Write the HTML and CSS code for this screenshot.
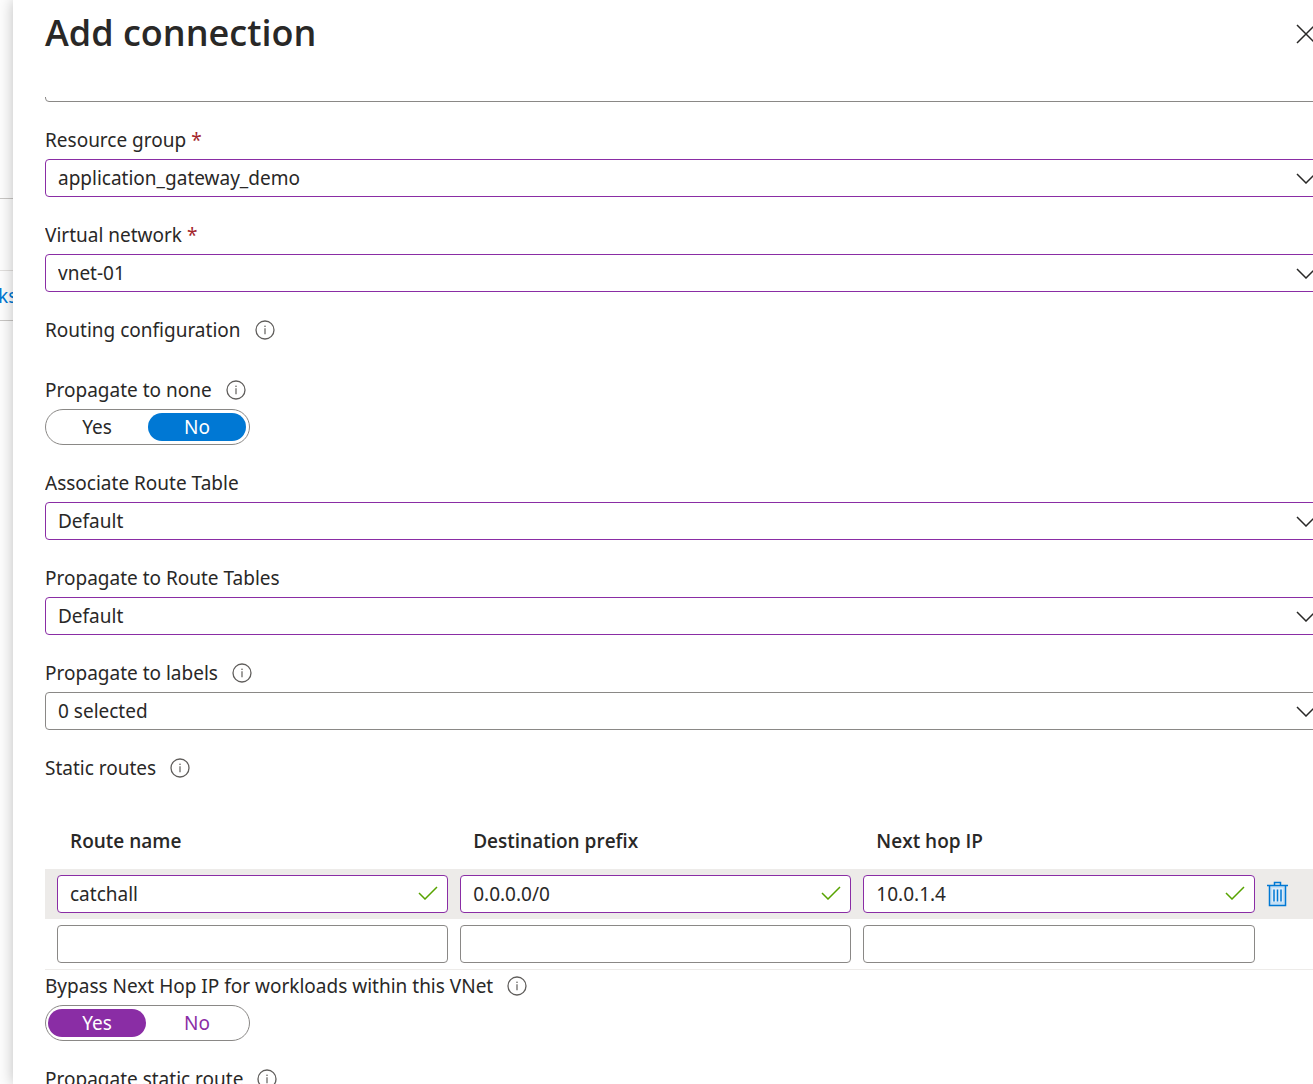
FILE: index.html
```html
<!DOCTYPE html>
<html lang="en">
<head>
<meta charset="utf-8">
<title>Add connection</title>
<link rel="stylesheet" href="styles.css">
</head>
<body>
<svg class="defs" aria-hidden="true">
  <symbol id="info" viewBox="0 0 20 20"><circle cx="10" cy="10" r="9" fill="none" stroke="currentColor" stroke-width="1.3"/><path d="M10 8.2v6" stroke="currentColor" stroke-width="1.2"/><circle cx="10" cy="6.2" r=".8" fill="currentColor"/></symbol>
  <symbol id="chevron" viewBox="0 0 20 11"><path d="M1 1l9 9 9-9" fill="none" stroke="currentColor" stroke-width="1.5"/></symbol>
  <symbol id="check" viewBox="0 0 20 14"><path d="M1 7l6 6L19 1" fill="none" stroke="currentColor" stroke-width="1.5"/></symbol>
</svg>
<div class="shell">
  <aside class="backdrop">
    <div class="backdrop-head"></div>
    <div class="backdrop-bar"></div>
    <div class="backdrop-row"><a href="#">ks</a></div>
  </aside>
  <main class="panel">
    <header class="panel-head">
      <h1>Add connection</h1>
      <button class="icon-button" type="button" aria-label="Close"><svg width="20" height="20" viewBox="0 0 20 20"><path d="M1 1l18 18M19 1L1 19" stroke="currentColor" stroke-width="1.5"/></svg></button>
    </header>
    <form class="panel-body">
      <div class="select select-cut"><select aria-label="Subscription"><option></option></select></div>
      <div class="field">
        <div class="label"><label for="group">Resource group <span class="required">*</span></label></div>
        <div class="select edited"><select id="group"><option>application_gateway_demo</option></select><svg class="chevron"><use href="#chevron"/></svg></div>
      </div>
      <div class="field">
        <div class="label"><label for="vnet">Virtual network <span class="required">*</span></label></div>
        <div class="select edited"><select id="vnet"><option>vnet-01</option></select><svg class="chevron"><use href="#chevron"/></svg></div>
      </div>
      <div class="field heading">
        <div class="label"><span>Routing configuration</span><button class="info" type="button" aria-label="Info"><svg><use href="#info"/></svg></button></div>
      </div>
      <div class="field">
        <div class="label"><span id="none-label">Propagate to none</span><button class="info" type="button" aria-label="Info"><svg><use href="#info"/></svg></button></div>
        <div class="toggle" role="radiogroup" aria-labelledby="none-label">
          <label><input type="radio" name="none"><span>Yes</span></label>
          <label><input type="radio" name="none" checked><span>No</span></label>
        </div>
      </div>
      <div class="field">
        <div class="label"><label for="assoc">Associate Route Table</label></div>
        <div class="select edited"><select id="assoc"><option>Default</option></select><svg class="chevron"><use href="#chevron"/></svg></div>
      </div>
      <div class="field">
        <div class="label"><label for="tables">Propagate to Route Tables</label></div>
        <div class="select edited"><select id="tables"><option>Default</option></select><svg class="chevron"><use href="#chevron"/></svg></div>
      </div>
      <div class="field">
        <div class="label"><label for="labels">Propagate to labels</label><button class="info" type="button" aria-label="Info"><svg><use href="#info"/></svg></button></div>
        <div class="select"><select id="labels"><option>0 selected</option></select><svg class="chevron"><use href="#chevron"/></svg></div>
      </div>
      <div class="field heading">
        <div class="label"><span id="routes-label">Static routes</span><button class="info" type="button" aria-label="Info"><svg><use href="#info"/></svg></button></div>
      </div>
      <table class="routes" aria-labelledby="routes-label">
        <thead>
          <tr><th class="col" id="c1">Route name</th><th class="col" id="c2">Destination prefix</th><th class="col" id="c3">Next hop IP</th><td></td></tr>
        </thead>
        <tbody>
          <tr class="active">
            <td><div class="entry edited"><input type="text" aria-labelledby="c1" value="catchall"><svg class="check"><use href="#check"/></svg></div></td>
            <td><div class="entry edited"><input type="text" aria-labelledby="c2" value="0.0.0.0/0"><svg class="check"><use href="#check"/></svg></div></td>
            <td><div class="entry edited"><input type="text" aria-labelledby="c3" value="10.0.1.4"><svg class="check"><use href="#check"/></svg></div></td>
            <td><button class="delete" type="button" aria-label="Delete route"><svg width="21" height="26" viewBox="0 0 21 26"><path d="M2.5 5v19.5h16V5" fill="#c7e0f4" stroke="#0078d4" stroke-width="1.5"/><path d="M5 7h11v14H5z" fill="#deecf9"/><path d="M0 4.5h21M7.5 4V1.5h6V4" fill="none" stroke="#0078d4" stroke-width="1.5"/><path d="M7 8.5v12M10.500 8.5v12M14 8.5v12" stroke="#0078d4" stroke-width="1.5"/></svg></button></td>
          </tr>
          <tr>
            <td><div class="entry"><input type="text" aria-labelledby="c1"></div></td>
            <td><div class="entry"><input type="text" aria-labelledby="c2"></div></td>
            <td><div class="entry"><input type="text" aria-labelledby="c3"></div></td>
            <td></td>
          </tr>
        </tbody>
      </table>
      <div class="field">
        <div class="label"><span id="bypass-label">Bypass Next Hop IP for workloads within this VNet</span><button class="info" type="button" aria-label="Info"><svg><use href="#info"/></svg></button></div>
        <div class="toggle toggle-edited" role="radiogroup" aria-labelledby="bypass-label">
          <label><input type="radio" name="bypass" checked><span>Yes</span></label>
          <label><input type="radio" name="bypass"><span>No</span></label>
        </div>
      </div>
      <div class="field">
        <div class="label"><span>Propagate static route</span><button class="info" type="button" aria-label="Info"><svg><use href="#info"/></svg></button></div>
      </div>
    </form>
  </main>
</div>
</body>
</html>
```

FILE: styles.css
```css
* { box-sizing: border-box; }

body {
  margin: 0;
  color: #292827;
  font-family: "Segoe UI", "Noto Sans", sans-serif;
  font-size: 19px;
  line-height: 28px;
  background: #fff;
}

button, input, select { font: inherit; color: inherit; }
button { display: flex; padding: 0; border: 0; background: none; }
h1, th { font-family: "Segoe UI", "Open Sans", sans-serif; font-weight: 600; }

.defs { position: absolute; width: 0; height: 0; }

.shell {
  display: grid;
  grid-template-columns: 13px minmax(0, 1fr);
  height: 100vh;
  overflow: hidden;
}

/* Page behind the panel */
.backdrop { overflow: hidden; background: #fdfdfd; }
.backdrop-head { height: 199px; border-bottom: 1px solid #c8c6c4; }
.backdrop-bar { height: 72px; border-bottom: 1px solid #e1dfdd; }
.backdrop-row { height: 50px; padding: 11px 0; border-bottom: 1px solid #c8c6c4; }
.backdrop-row a { margin-left: -2px; color: #0078d4; text-decoration: none; }

/* Panel runs past the right edge of the window */
.panel {
  display: flex;
  flex-direction: column;
  min-height: 0;
  margin-right: -48px;
  padding: 0 32px;
  background: #fff;
  box-shadow: 0 0 14px rgba(0, 0, 0, .25);
}

.panel-head {
  display: flex;
  flex: none;
  align-items: center;
  justify-content: space-between;
  height: 97px;
  padding: 0 13px 29px 0;
}
h1 { margin: 0; padding-bottom: 3px; font-size: 36px; line-height: 48px; }

.panel-body { flex: 1; min-height: 0; overflow: hidden; }

.field { margin-bottom: 24px; }
.heading { margin-bottom: 32px; }
.label { display: flex; align-items: center; gap: 14px; height: 28px; margin-bottom: 5px; }
.heading .label { margin-bottom: 0; }
.required { color: #a4262c; }
.info { color: #605e5c; }
.info svg { width: 20px; height: 20px; }

.select, .entry { position: relative; height: 38px; }
.select-cut { margin: -33px 0 24px; }
.select select, .entry input {
  display: block;
  width: 100%;
  height: 100%;
  padding: 0 12px;
  border: 1px solid #8a8886;
  border-radius: 4px;
  appearance: none;
  background: #fff;
  outline: 0;
}
.edited select, .edited input { border-color: #8a2da5; }
.chevron { position: absolute; top: 14px; right: 13px; width: 20px; height: 11px; pointer-events: none; }
.check { position: absolute; top: 11px; right: 10px; width: 20px; height: 14px; color: #57a300; pointer-events: none; }

.toggle {
  display: inline-flex;
  gap: 2px;
  padding: 3px 3px 3px 2px;
  border: 1px solid #8a8886;
  border-radius: 18px;
  vertical-align: top;
}
.toggle input { position: absolute; opacity: 0; }
.toggle span { display: block; width: 98px; border-radius: 14px; text-align: center; }
.toggle :checked + span { color: #fff; background: #0078d4; }
.toggle-edited { color: #8a2da5; }
.toggle-edited :checked + span { background: #8a2da5; }

.routes {
  width: 100%;
  margin-bottom: 2px;
  border-collapse: collapse;
  border-bottom: 1px solid #edebe9;
  table-layout: fixed;
}
.routes th { height: 55px; padding: 0 25px 2px; text-align: left; }
.routes .col { width: 31.4%; }
.routes td { height: 50px; padding: 0 0 0 12px; }
.active { background: #edebe9; }
```
